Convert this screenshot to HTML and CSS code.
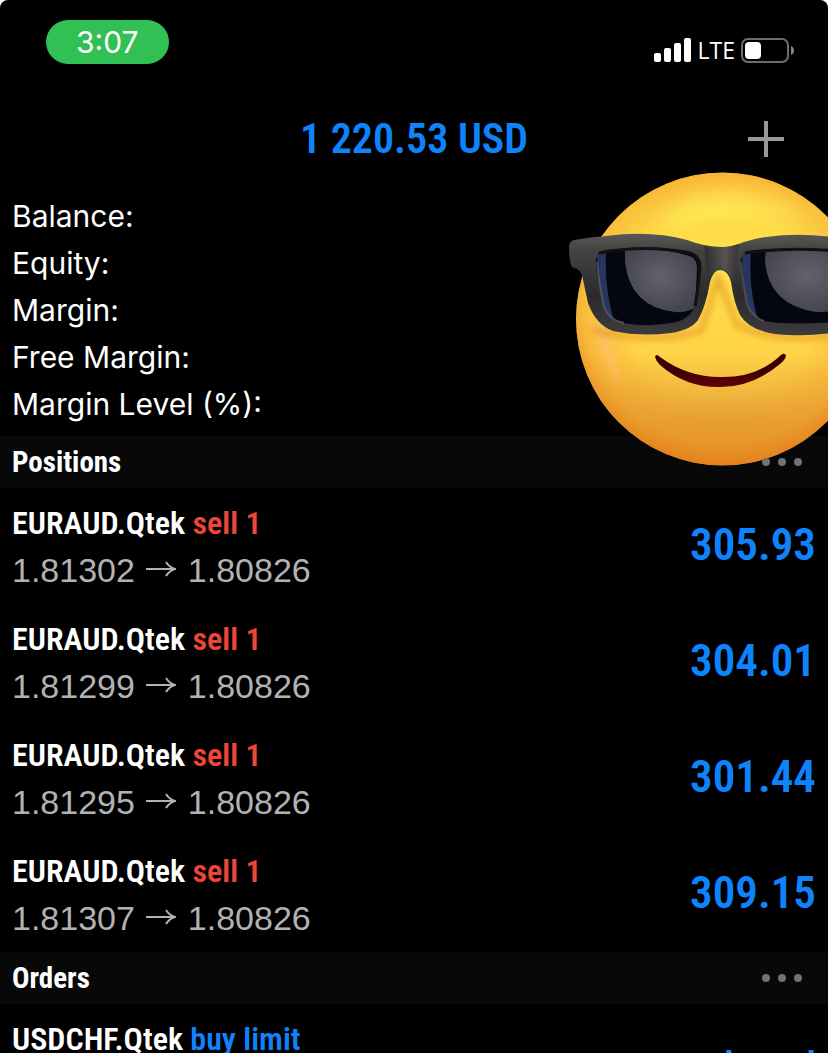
FILE: index.html
```
<!DOCTYPE html>
<html lang="en">
<head>
<meta charset="utf-8">
<meta name="viewport" content="width=device-width, initial-scale=1">
<title>Trade</title>
<link rel="stylesheet" href="styles.css">
</head>
<body>
<div class="screen">
  <div class="status">
    <span class="clock">3:07</span>
    <div class="indicators">
      <svg class="signal" viewBox="0 0 38 24" aria-hidden="true"><rect x="0" y="15" width="7" height="9" rx="2"/><rect x="10" y="10" width="7" height="14" rx="2"/><rect x="20" y="5" width="7" height="19" rx="2"/><rect x="30" y="0" width="7" height="24" rx="2"/></svg>
      <span class="network">LTE</span>
      <svg class="battery" viewBox="0 0 53 25" aria-hidden="true"><rect x="1" y="1" width="46" height="23" rx="6" fill="none" stroke="#6d6d6d" stroke-width="2"/><rect x="4" y="4" width="16" height="17" rx="4" fill="#fff"/><path d="M50 8q3 1.500 3 4.500t-3 4.500z" fill="#858585"/></svg>
    </div>
  </div>
  <header class="topbar">
    <h1 class="profit">1 220.53 USD</h1>
    <button class="add" type="button" aria-label="New order"><svg viewBox="0 0 36 36" aria-hidden="true"><path d="M18 0v36M0 18h36" stroke="#999" stroke-width="4"/></svg></button>
  </header>
  <ul class="summary">
    <li>Balance:</li>
    <li>Equity:</li>
    <li>Margin:</li>
    <li>Free Margin:</li>
    <li>Margin Level (%):</li>
  </ul>
  <svg class="sticker" viewBox="568 170 260 297" role="img" aria-label="Smiling face with sunglasses">
    <defs>
      <linearGradient id="skin" x1="0" y1="0" x2="0" y2="1"><stop offset="0" stop-color="#ffc43a"/><stop offset=".12" stop-color="#ffd947"/><stop offset=".3" stop-color="#ffe04b"/><stop offset=".62" stop-color="#ffd347"/><stop offset=".82" stop-color="#e9a738"/><stop offset="1" stop-color="#dc8420"/></linearGradient>
      <radialGradient id="rim" cx=".5" cy=".46" r=".54"><stop offset=".6" stop-color="#ed9428" stop-opacity="0"/><stop offset=".86" stop-color="#ef992b" stop-opacity=".4"/><stop offset="1" stop-color="#e7801b" stop-opacity=".75"/></radialGradient>
      <linearGradient id="frame" x1="0" y1="0" x2="0" y2="1"><stop offset="0" stop-color="#5a5857"/><stop offset=".16" stop-color="#454342"/><stop offset=".6" stop-color="#2b2b2d"/><stop offset="1" stop-color="#3c3c3f"/></linearGradient>
      <linearGradient id="bridge"><stop offset="0" stop-color="#242323"/><stop offset=".6" stop-color="#61605f"/><stop offset="1" stop-color="#2b2a2a"/></linearGradient>
      <radialGradient id="glare" cx=".5" cy=".45" r=".65"><stop offset="0" stop-color="#62626c"/><stop offset="1" stop-color="#41414a"/></radialGradient>
      <linearGradient id="lip" x1="0" y1="0" x2="0" y2="1"><stop offset=".45" stop-color="#360004"/><stop offset="1" stop-color="#650207"/></linearGradient>
      <filter id="soft" x="-30%" y="-30%" width="160%" height="160%"><feGaussianBlur stdDeviation="8"/></filter>
      <filter id="edge" x="-50%" y="-30%" width="200%" height="160%"><feGaussianBlur stdDeviation="3"/></filter>
      <clipPath id="head"><circle cx="722.500" cy="319" r="146.500"/></clipPath>
      <path id="glasses" fill-rule="evenodd" d="M574 240Q590 237 606 236Q651 230 687 240Q705 247 722 247Q732 247 744 242Q761 236 790 235Q820 234 850 240V330Q810 338 775 334Q749 330 740 315Q734 303 731 282Q728 270 720 270Q713 270 710 282Q706 306 698 320Q691 330 671 333Q641 337 613 331Q596 325 588 303L582 275Q580 269 572 267Q569 262 569 246Q570 241 574 240ZM599 253Q594 258 597 274L604 307Q609 320 624 323Q650 328 677 322Q690 318 695 306Q699 286 700 267Q700 256 688 253Q641 246 607 250Q601 251 599 253ZM745 253Q739 258 741 271L747 304Q752 317 764 321Q789 326 850 321V252Q801 247 755 250Q748 250 745 253Z"/>
    </defs>
    <circle cx="722.500" cy="319" r="146.500" fill="url(#skin)"/>
    <g clip-path="url(#head)">
      <path d="M655 224Q683 184 737 187Q788 190 807 222Q754 209 655 224Z" fill="#fff05f" opacity=".7" filter="url(#soft)"/>
      <circle cx="722.500" cy="319" r="146.500" fill="url(#rim)"/>
      <path d="M591 317Q603 362 619 385Q620 360 606 332Z" fill="#ffc078" opacity=".6" filter="url(#edge)"/>
      <path d="M592 330Q650 345 701 331L718 278L737 325Q777 344 840 335" fill="none" stroke="#d77b16" stroke-width="5" opacity=".55" filter="url(#edge)"/>
    </g>
    <path d="M592 246H700Q706 256 704 275Q700 322 677 328Q649 332 612 328L598 312ZM738 247H850V330H765L745 317Z" fill="#04070f"/>
    <path d="M597 255L606 250Q604 290 615 324Q599 316 597 255ZM742 255L751 250Q748 290 759 323Q744 314 742 255Z" fill="#26365f"/>
    <path d="M625 249Q665 247 692 257Q697 260 697 269L695 308Q686 313 675 312Q630 307 625 262Z" fill="url(#glare)"/>
    <path d="M766 247Q811 243 850 250V306Q837 312 816 312Q769 305 765 262Z" fill="url(#glare)"/>
    <use href="#glasses" fill="url(#frame)"/>
    <path d="M704 246Q722 250 739 244L733 282Q729 269 720 269Q714 269 709 284Z" fill="url(#bridge)" opacity=".65"/>
    <path d="M597 262Q598 278 604 307Q609 320 624 323M741 262Q742 276 747 304Q752 317 764 321" fill="none" stroke="#6c6b70" stroke-width="2" opacity=".6"/>
    <path d="M599 253Q645 244 690 253Q700 256 700 267Q699 286 695 306M745 253Q790 246 850 252" fill="none" stroke="#111113" stroke-width="3"/>
    <path d="M655 357Q656 353 660 357Q687 377 720 377Q757 378 781 355Q785 352 786 356Q785 360 780 364Q751 388 718 387Q685 387 660 365Q656 361 655 357Z" fill="url(#lip)"/>
  </svg>
  <section>
    <div class="bar"><h2>Positions</h2><button class="more" type="button" aria-label="Positions menu"><i></i><i></i><i></i></button></div>
    <ul class="deals">
      <li><div><p class="name">EURAUD.Qtek <span class="sell">sell 1</span></p><p class="prices">1.81302 <svg viewBox="0 0 30 18" role="img" aria-label="to"><path d="M0 9h28M20 2Q23 7 29 9Q23 11 20 16"/></svg> 1.80826</p></div><span class="result">305.93</span></li>
      <li><div><p class="name">EURAUD.Qtek <span class="sell">sell 1</span></p><p class="prices">1.81299 <svg viewBox="0 0 30 18" role="img" aria-label="to"><path d="M0 9h28M20 2Q23 7 29 9Q23 11 20 16"/></svg> 1.80826</p></div><span class="result">304.01</span></li>
      <li><div><p class="name">EURAUD.Qtek <span class="sell">sell 1</span></p><p class="prices">1.81295 <svg viewBox="0 0 30 18" role="img" aria-label="to"><path d="M0 9h28M20 2Q23 7 29 9Q23 11 20 16"/></svg> 1.80826</p></div><span class="result">301.44</span></li>
      <li><div><p class="name">EURAUD.Qtek <span class="sell">sell 1</span></p><p class="prices">1.81307 <svg viewBox="0 0 30 18" role="img" aria-label="to"><path d="M0 9h28M20 2Q23 7 29 9Q23 11 20 16"/></svg> 1.80826</p></div><span class="result">309.15</span></li>
    </ul>
  </section>
  <section>
    <div class="bar"><h2>Orders</h2><button class="more" type="button" aria-label="Orders menu"><i></i><i></i><i></i></button></div>
    <ul class="deals">
      <li class="order"><p class="name">USDCHF.Qtek <span class="buy">buy limit</span></p><span class="state">placed</span></li>
    </ul>
  </section>
</div>
</body>
</html>
```
FILE: styles.css
```
* { box-sizing: border-box; margin: 0; padding: 0; }
body { background: #fff; }
.screen {
  position: relative;
  height: 100vh;
  overflow: hidden;
  background: #000;
  color: #fff;
  border-radius: 8px 8px 0 0;
  font-family: Inter, "Liberation Sans", sans-serif;
}
ul { list-style: none; }
button { border: 0; background: none; cursor: pointer; }
svg { display: block; }
.status {
  display: flex;
  justify-content: space-between;
  align-items: flex-start;
  padding: 20px 34px 0 46px;
  height: 92px;
}
.clock {
  padding: 0 30px;
  border-radius: 22px;
  background: #31c053;
  font-size: 30px;
  line-height: 44px;
}
.indicators { display: flex; align-items: center; gap: 6px; padding-top: 15px; }
.signal { width: 38px; height: 24px; fill: #fff; }
.network { font: 500 23px/30px "Open Sans", sans-serif; }
.battery { width: 53px; height: 25px; }
.topbar {
  display: grid;
  grid-template-columns: 1fr auto 1fr;
  align-items: center;
  height: 94px;
  padding: 0 44px;
}
.profit {
  grid-column: 2;
  color: #0f83fb;
  font: 600 42px/50px "Roboto Condensed", sans-serif;
}
.add { justify-self: end; width: 36px; height: 36px; }
.summary { padding: 7px 12px 8px; font-size: 30px; line-height: 47px; }
.sticker {
  position: absolute;
  top: 170px;
  right: 0;
  width: 260px;
  height: 297px;
}
.bar {
  display: flex;
  align-items: center;
  justify-content: space-between;
  height: 52px;
  padding: 0 26px 0 12px;
  background: #080808;
}
.bar h2 { font: bold 29px/52px "Roboto Condensed", sans-serif; }
.more { position: relative; display: flex; gap: 8px; }
.more i { width: 8px; height: 8px; border-radius: 50%; background: #727272; }
.deals li {
  display: flex;
  align-items: center;
  justify-content: space-between;
  padding: 12px 12px 10px;
}
.name { font: 600 32px/47px "Roboto Condensed", sans-serif; }
.sell { color: #ee4636; }
.buy { color: #0f83fb; }
.prices { color: #b2b2b2; font: 34px/47px "Liberation Sans", sans-serif; }
.prices svg {
  display: inline-block;
  width: 30px;
  height: 18px;
  margin: 0 2px;
  vertical-align: 4px;
  fill: none;
  stroke: #b2b2b2;
  stroke-width: 2;
}
.result { padding-bottom: 4px; color: #0f83fb; font: 600 45px/50px "Roboto Condensed", sans-serif; }
.state { padding-top: 26px; color: #0f83fb; font: 500 43px/50px "Roboto Condensed", sans-serif; }
.deals .order { align-items: flex-start; padding-bottom: 0; }
```
